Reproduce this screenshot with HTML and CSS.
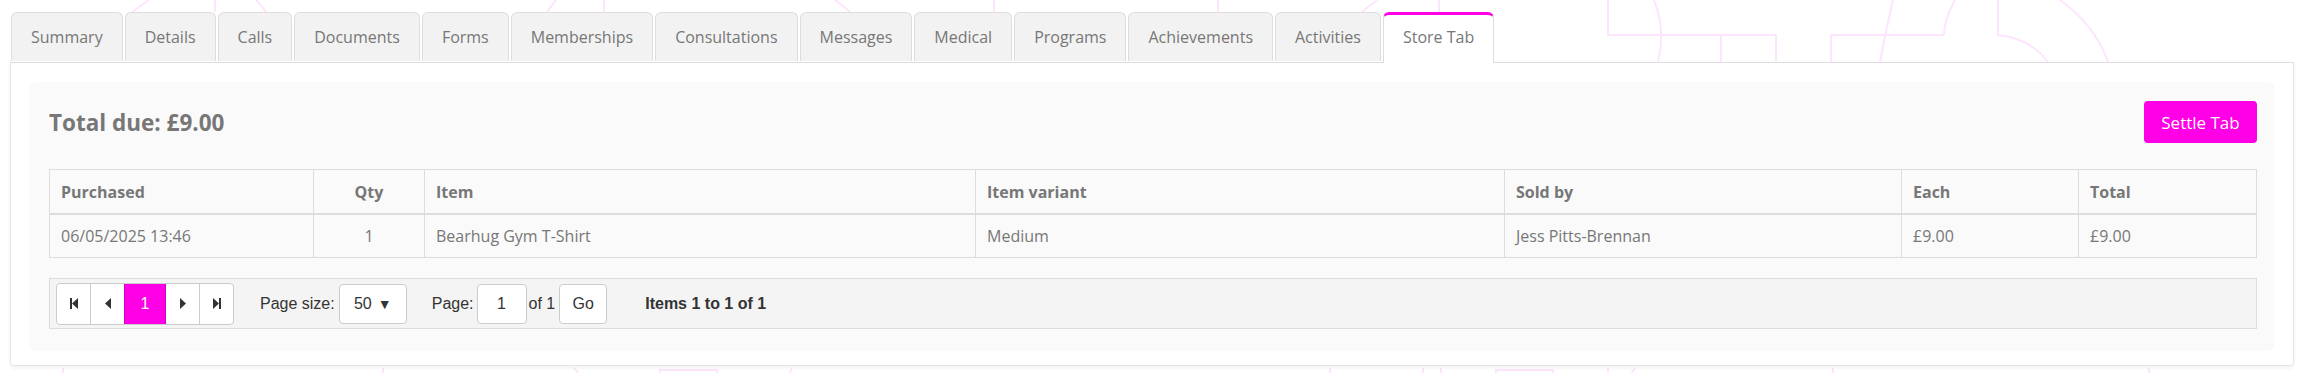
FILE: index.html
```html
<!DOCTYPE html>
<html lang="en">
<head>
    <meta charset="UTF-8">
    <meta name="viewport" content="width=device-width, initial-scale=1.0">
    <title>Store Tab</title>
    <link rel="stylesheet" href="styles.css">
</head>
<body>

    <!-- faint logo watermark behind the page -->
    <svg class="watermark" width="2306" height="377" viewBox="0 0 2306 377" fill="none">
        <path d="M149 0 Q140 6 132 12" />
        <path d="M215 0 V12" />
        <path d="M256 0 Q262 6 266 12" />
        <path d="M556 0 Q551 6 547 12" />
        <path d="M604 0 V12" />
        <path d="M835 0 Q843 6 850 12" />
        <path d="M994 0 V12" />
        <path d="M1218 0 V12" />
        <path d="M1377 0 Q1369 6 1362 12" />
        <path d="M1439 0 V12" />
        <path d="M1608 0 V35 H1776 V62" />
        <path d="M1654 0 Q1666 30 1658 62" />
        <path d="M1721 35 V62" />
        <path d="M1831 62 V35 H1944" />
        <path d="M1893 0 Q1885 35 1880 62" />
        <path d="M1955 0 Q1944 20 1944 35" />
        <path d="M1998 0 V35 Q2030 38 2048 62" />
        <path d="M2060 0 Q2095 25 2108 62" />
        <path d="M63 368 V377" />
        <path d="M383 368 V377" />
        <path d="M574 368 Q578 372 580 377" />
        <path d="M660 377 V370 H717 V377" />
        <path d="M792 368 Q790 372 788 377" />
        <path d="M1330 368 V377" />
        <path d="M1423 368 V377" />
        <path d="M1441 368 V377" />
        <path d="M1496 377 V370 H1553 V377" />
        <path d="M1608 368 V377" />
        <path d="M1635 368 Q1632 372 1630 377" />
        <path d="M1833 368 V377" />
        <path d="M2148 368 Q2150 372 2151 377" />
    </svg>

    <div class="page">
        <ul class="tabs">
            <li>Summary</li>
            <li>Details</li>
            <li>Calls</li>
            <li>Documents</li>
            <li>Forms</li>
            <li>Memberships</li>
            <li>Consultations</li>
            <li>Messages</li>
            <li>Medical</li>
            <li>Programs</li>
            <li>Achievements</li>
            <li>Activities</li>
            <li class="active">Store Tab</li>
        </ul>

        <div class="tab-panel">
            <div class="store-box">
                <div class="store-head">
                    <h3>Total due: £9.00</h3>
                    <button class="btn-settle">Settle Tab</button>
                </div>

                <table class="grid">
                    <colgroup>
                        <col style="width:264px">
                        <col style="width:111px">
                        <col style="width:551px">
                        <col style="width:529px">
                        <col style="width:397px">
                        <col style="width:177px">
                        <col>
                    </colgroup>
                    <thead>
                        <tr>
                            <th>Purchased</th>
                            <th class="center">Qty</th>
                            <th>Item</th>
                            <th>Item variant</th>
                            <th>Sold by</th>
                            <th>Each</th>
                            <th>Total</th>
                        </tr>
                    </thead>
                    <tbody>
                        <tr>
                            <td>06/05/2025 13:46</td>
                            <td class="center">1</td>
                            <td>Bearhug Gym T-Shirt</td>
                            <td>Medium</td>
                            <td>Jess Pitts-Brennan</td>
                            <td>£9.00</td>
                            <td>£9.00</td>
                        </tr>
                    </tbody>
                </table>

                <div class="pager">
                    <div class="pager-nav">
                        <span class="pg-btn first">
                            <svg width="8" height="11" viewBox="0 0 8 11"><rect x="0" y="0" width="2" height="11" fill="#333"/><path d="M8 0 L2 5.5 L8 11 Z" fill="#333"/></svg>
                        </span>
                        <span class="pg-btn">
                            <svg width="6" height="11" viewBox="0 0 6 11"><path d="M6 0 L0 5.5 L6 11 Z" fill="#333"/></svg>
                        </span>
                        <span class="pg-btn current">1</span>
                        <span class="pg-btn">
                            <svg width="6" height="11" viewBox="0 0 6 11"><path d="M0 0 L6 5.5 L0 11 Z" fill="#333"/></svg>
                        </span>
                        <span class="pg-btn last">
                            <svg width="8" height="11" viewBox="0 0 8 11"><path d="M0 0 L6 5.5 L0 11 Z" fill="#333"/><rect x="6" y="0" width="2" height="11" fill="#333"/></svg>
                        </span>
                    </div>
                    <span class="pg-label">Page size:</span>
                    <span class="pg-select">50 <span class="caret">▼</span></span>
                    <span class="pg-label pg-page">Page:</span>
                    <span class="pg-input">1</span>
                    <span class="pg-of">of 1</span>
                    <span class="pg-go">Go</span>
                    <span class="pg-info">Items 1 to 1 of 1</span>
                </div>
            </div>
        </div>
    </div>

</body>
</html>
```

FILE: styles.css
```css
html,
body {
    overflow: hidden;
}

body {
    margin: 0;
    background-color: #fff;
    font-family: "Open Sans", sans-serif;
    color: #777;
    position: relative;
}

.watermark {
    position: absolute;
    top: 0;
    left: 0;
    stroke: #fde6fd;
    stroke-width: 2;
}

.page {
    position: relative;
    padding: 12px 12px 7px 10px;
}

.tabs {
    list-style: none;
    margin: 0;
    padding: 0 0 0 1px;
    display: flex;
    gap: 2px;
    border-bottom: 1px solid #ddd;
}

.tabs li {
    height: 48px;
    line-height: 48px;
    padding: 0 19px;
    font-size: 16px;
    color: #777;
    background-color: #f2f2f2;
    border: 1px solid #ddd;
    border-bottom: none;
    border-radius: 6px 6px 0 0;
    margin-bottom: -1px;
}

.tabs li.active {
    background-color: #fff;
    border-top: 3px solid #ff00e6;
    height: 47px;
    line-height: 44px;
    padding-bottom: 1px;
}

.tab-panel {
    background-color: #fff;
    border: 1px solid #e6e6e6;
    border-top: none;
    border-radius: 0 0 4px 4px;
    box-shadow: 0 2px 4px rgba(0, 0, 0, 0.06);
    padding: 19px 19px 16px 18px;
}

.store-box {
    background-color: #fafafa;
    border-radius: 6px;
    box-shadow: 0 1px 1px rgba(0, 0, 0, 0.04);
    padding: 19px 17px 20px 20px;
}

.store-head {
    display: flex;
    justify-content: space-between;
    align-items: center;
    margin-bottom: 26px;
}

.store-head h3 {
    margin: 0;
    font-size: 22.5px;
    font-weight: 700;
    color: #777;
}

.btn-settle {
    font-family: "Open Sans", sans-serif;
    font-size: 17px;
    color: #fff;
    background-color: #ff00e6;
    border: none;
    border-radius: 4px;
    width: 113px;
    height: 42px;
    padding: 0;
}

.grid {
    width: 100%;
    border-collapse: collapse;
    table-layout: fixed;
    font-size: 16px;
}

.grid th,
.grid td {
    border: 1px solid #ddd;
    text-align: left;
    padding: 0 11px;
    color: #777;
}

.grid th {
    height: 43px;
    font-weight: 700;
    border-bottom: 2px solid #ddd;
}

.grid td {
    height: 42px;
}

.grid .center {
    text-align: center;
}

.pager {
    margin-top: 20px;
    display: flex;
    align-items: center;
    height: 49px;
    padding: 0 6px;
    background-color: #f4f4f4;
    border: 1px solid #ddd;
    font-family: "Liberation Sans", Arial, sans-serif;
    font-size: 16px;
    color: #333;
}

.pager-nav {
    display: flex;
    height: 40px;
    border: 1px solid #ccc;
    border-radius: 4px;
    background-color: #fff;
    overflow: hidden;
}

.pg-btn {
    width: 33px;
    display: flex;
    align-items: center;
    justify-content: center;
    border-left: 1px solid #ccc;
}

.pg-btn.first {
    border-left: none;
}

.pg-btn.current {
    width: 40px;
    background-color: #ff00e6;
    color: #fff;
    border-left-color: #d400bf;
}

.pg-btn.current + .pg-btn {
    border-left-color: #d400bf;
}

.pg-label {
    margin-left: 26px;
    color: #333;
}

.pg-label.pg-page {
    margin-left: 25px;
}

.pg-select,
.pg-input,
.pg-go {
    height: 38px;
    display: flex;
    align-items: center;
    justify-content: center;
    background-color: #fff;
    border: 1px solid #ccc;
    border-radius: 4px;
    box-sizing: content-box;
}

.pg-select {
    width: 66px;
    margin-left: 4px;
    gap: 6px;
}

.caret {
    font-size: 14px;
}

.pg-input {
    width: 48px;
    margin-left: 3px;
}

.pg-of {
    margin-left: 2px;
}

.pg-go {
    width: 46px;
    margin-left: 4px;
}

.pg-info {
    margin-left: 38px;
    font-weight: bold;
}
```
